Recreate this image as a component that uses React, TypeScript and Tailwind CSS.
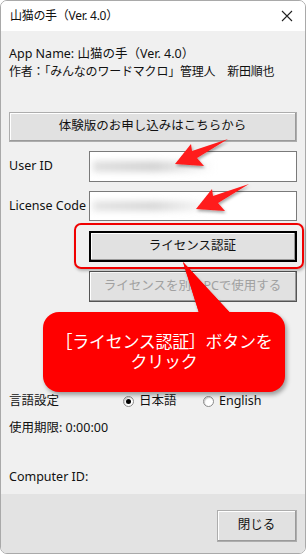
import React from 'react';

const font = { fontFamily: '"Noto Sans", "Noto Sans CJK JP", sans-serif' };

const WinButton: React.FC<{ label: string; className?: string; disabled?: boolean; focused?: boolean }> = (props) => (
    <div className={`
        ${props.className ?? ''}
        ${props.focused ? 'border-black' : props.disabled ? 'border-[#555]' : 'border-[#adadad]'}
        border flex items-center justify-center bg-[#e1e1e1]
    `}>
        <div className={`
            ${props.disabled ? 'text-[#a0a0a0]' : 'text-[#111]'}
            w-full h-full flex items-center justify-center text-[12.5px]
            border-r border-b border-[#9a9a9a] shadow-[inset_1px_1px_0_#fff]
        `}>{props.label}</div>
    </div>
);

const Arrow: React.FC<{ dx: number; dy: number }> = ({ dx, dy }) => (
    <polygon
        transform={`translate(${dx} ${dy})`}
        points="175,164 191,144 192,151 228,139 197,158 204,166"
        fill="#ff1a1a"
        filter="url(#sh)"
    />
);

const Radio: React.FC<{ checked?: boolean }> = ({ checked }) => (
    <span className="w-[11px] h-[11px] rounded-full border border-[#8a8a8a] bg-white flex items-center justify-center shadow-[inset_1px_1px_1px_#ccc]">
        {checked && <span className="w-[5px] h-[5px] rounded-full bg-black" />}
    </span>
);

const App: React.FC = () => {
    return (
        <div className="relative w-[307px] h-[555px] bg-white overflow-hidden text-[#111]" style={font}>
            <div className="w-[306px] h-[554px] rounded-[7px] border border-[#a9a9a9] flex flex-col overflow-hidden">
                {/* title bar */}
                <div className="h-[30px] bg-white flex items-center justify-between pl-[9px] pr-[12px] shrink-0">
                    <span className="text-[12px] tracking-[-0.3px]">山猫の手（Ver. 4.0）</span>
                    <svg width="12" height="12" viewBox="0 0 12 12">
                        <path d="M1 1 L11 11 M11 1 L1 11" stroke="#222" strokeWidth="1.1" />
                    </svg>
                </div>

                {/* body */}
                <div className="flex-1 bg-[#f0f0f0] px-[8px] flex flex-col">
                    <div className="mt-[15px] h-[17px] text-[12.5px] flex items-center">App Name: 山猫の手（Ver. 4.0）</div>
                    <div className="h-[17px] text-[12px] flex items-center tracking-[-0.2px]">作者：「みんなのワードマクロ」管理人　新田順也</div>

                    <WinButton className="mt-[32px] h-[30px]" label="体験版のお申し込みはこちらから" />

                    <div className="mt-[9px] flex items-center h-[31px]">
                        <span className="w-[80px] text-[12.5px]">User ID</span>
                        <div className="flex-1 h-full bg-white border border-[#7a7a7a] relative overflow-hidden">
                            <div className="absolute left-[3px] top-[9px] w-[122px] h-[11px] bg-gradient-to-r from-[#e0e0e0] via-[#d4d4d4] to-transparent blur-[3px]" />
                        </div>
                    </div>
                    <div className="mt-[9px] flex items-center h-[30px]">
                        <span className="w-[80px] text-[12.5px]">License Code</span>
                        <div className="flex-1 h-full bg-white border border-[#7a7a7a] relative overflow-hidden">
                            <div className="absolute left-[3px] top-[9px] w-[122px] h-[10px] bg-gradient-to-r from-[#e4e4e4] via-[#d8d8d8] to-transparent blur-[3px]" />
                        </div>
                    </div>

                    <div className="mt-[10px] ml-[80px] flex flex-col gap-[9px]">
                        <WinButton className="h-[31px] border-2" focused label="ライセンス認証" />
                        <WinButton className="h-[31px]" disabled label="ライセンスを別のPCで使用する" />
                    </div>

                    <div className="mt-[91px] flex items-center h-[17px] text-[12.5px]">
                        <span className="w-[114px]">言語設定</span>
                        <Radio checked />
                        <span className="ml-[5px] w-[64px]">日本語</span>
                        <Radio />
                        <span className="ml-[5px]">English</span>
                    </div>
                    <div className="mt-[10px] h-[17px] flex items-center text-[12.5px]">使用期限: 0:00:00</div>
                    <div className="mt-[32px] h-[17px] flex items-center text-[12.5px]">Computer ID:</div>
                </div>

                {/* footer */}
                <div className="h-[59px] bg-[#e3e3e3] flex justify-end items-start pt-[16px] pr-[8px] shrink-0">
                    <WinButton className="w-[80px] h-[32px]" label="閉じる" />
                </div>
            </div>

            {/* annotation overlay */}
            <div className="absolute left-[74px] top-[223px] w-[230px] h-[46px] rounded-[7px] border-2 border-[#f00000] shadow-[1px_2px_3px_rgba(0,0,0,0.25)]" />

            <svg className="absolute left-0 top-0 pointer-events-none" width="307" height="555">
                <defs>
                    <filter id="sh" x="-30%" y="-30%" width="160%" height="160%">
                        <feDropShadow dx="1" dy="2" stdDeviation="1.5" floodColor="#000" floodOpacity="0.35" />
                    </filter>
                </defs>
                <Arrow dx={0} dy={0} />
                <Arrow dx={21} dy={45} />
                <polygon points="183,262 200,316 233,316" fill="#ff0000" filter="url(#sh)" />
            </svg>

            <div className="absolute left-[43px] top-[312px] w-[242px] h-[80px] rounded-[16px] bg-[#ff0000] shadow-[2px_3px_4px_rgba(0,0,0,0.35)] flex flex-col items-center justify-center text-white text-[17px] leading-[20px] tracking-[-0.3px]">
                <span>［ライセンス認証］ボタンを</span>
                <span>クリック</span>
            </div>
            <svg className="absolute left-0 top-0 pointer-events-none" width="307" height="555">
                <polygon points="183,262 200,316 233,316" fill="#ff0000" />
            </svg>
        </div>
    );
};

export default App;
